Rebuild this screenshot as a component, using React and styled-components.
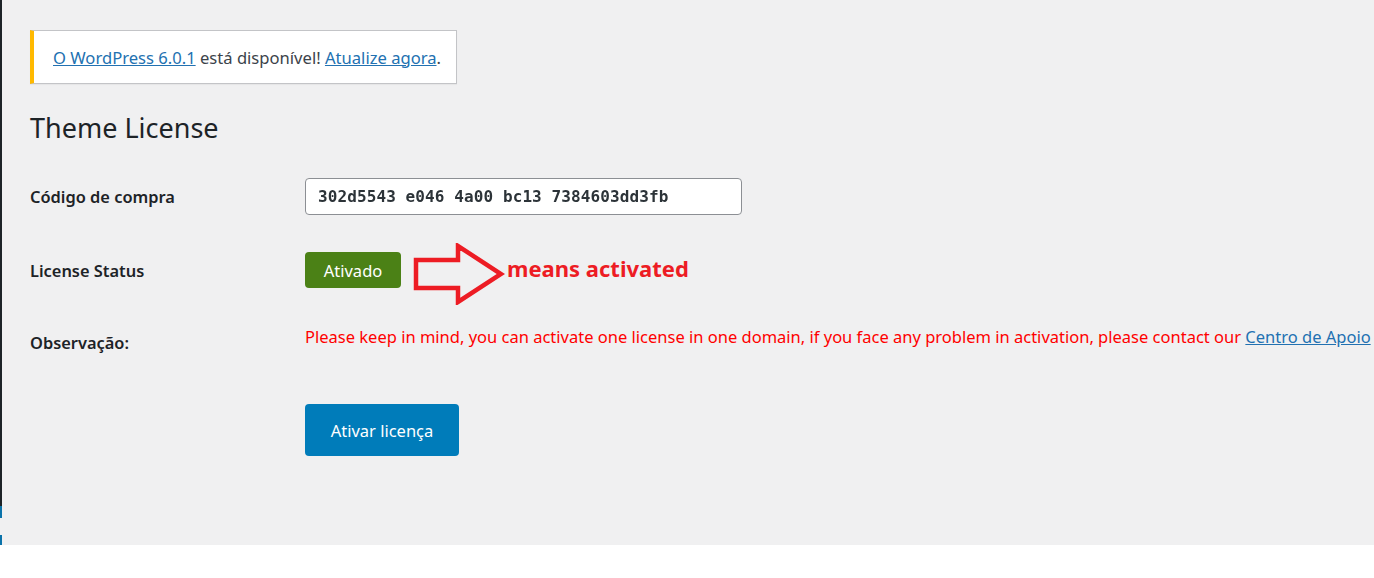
import React from "react";
import styled, { createGlobalStyle } from "styled-components";

const GlobalStyle = createGlobalStyle`
  html, body {
    margin: 0;
    padding: 0;
    background: #ffffff;
  }
  body {
    font-family: "Noto Sans", "Open Sans", sans-serif;
    color: #1d2327;
  }
`;

const Screen = styled.div`
  display: flex;
  height: 545px;
  background: #f0f0f1;
  overflow: hidden;
`;

const SideStrip = styled.div`
  width: 2px;
  flex-shrink: 0;
  display: flex;
  flex-direction: column;
`;

const StripPart = styled.div`
  height: ${(p) => p.h}px;
  background: ${(p) => p.color};
`;

const Content = styled.div`
  flex: 1;
  padding: 30px 0 0 28px;
  white-space: nowrap;
`;

const Notice = styled.div`
  box-sizing: border-box;
  width: 427px;
  height: 54px;
  background: #fff;
  border: 1px solid #c3c4c7;
  border-left: 4px solid #ffb900;
  box-shadow: 0 1px 1px rgba(0, 0, 0, 0.04);
  display: flex;
  align-items: center;
  padding-left: 19px;
  font-size: 16.6px;
  color: #3c434a;
`;

const Link = styled.a`
  color: #2271b1;
  text-decoration: underline;
`;

const Title = styled.h1`
  margin: 25px 0 31px;
  font-size: 27px;
  font-weight: 400;
  line-height: 38px;
  color: #1d2327;
`;

const Row = styled.div`
  display: flex;
  align-items: ${(p) => p.align || "center"};
  height: ${(p) => (p.h ? `${p.h}px` : "auto")};
  margin-bottom: ${(p) => p.mb || 0}px;
`;

const Label = styled.div`
  width: 275px;
  flex-shrink: 0;
  font-size: 16.4px;
  font-weight: 600;
  line-height: 20px;
  color: #1d2327;
  margin-top: ${(p) => p.mt || 0}px;
  margin-bottom: ${(p) => p.mbot || 0}px;
`;

const CodeInput = styled.input`
  box-sizing: border-box;
  width: 437px;
  height: 37px;
  border: 1px solid #8c8f94;
  border-radius: 4px;
  background: #fff;
  padding: 0 12px;
  font-family: "DejaVu Sans Mono", monospace;
  font-size: 16px;
  font-weight: 700;
  letter-spacing: 0.1px;
  color: #2c3338;
  filter: blur(0.5px);
`;

const StatusBadge = styled.span`
  display: inline-flex;
  align-items: center;
  justify-content: center;
  width: 96px;
  height: 36px;
  border-radius: 4px;
  background: #4b8116;
  color: #fff;
  font-size: 16.5px;
  margin-bottom: 8px;
`;

const Arrow = styled.svg`
  margin-left: 12px;
  flex-shrink: 0;
`;

const Callout = styled.span`
  margin-left: 2px;
  margin-bottom: 12px;
  font-size: 22px;
  font-weight: 700;
  color: #ed1c24;
`;

const Note = styled.div`
  font-size: 16.5px;
  line-height: 20px;
  color: #ff0000;
`;

const SubmitButton = styled.button`
  margin-left: 275px;
  width: 154px;
  height: 52px;
  border: none;
  border-radius: 4px;
  background: #007cba;
  color: #fff;
  font-family: inherit;
  font-size: 16.5px;
  cursor: pointer;
`;

const Below = styled.div`
  height: 33px;
  background: #fff;
`;

export default function App() {
  return (
    <>
      <GlobalStyle />
      <Screen>
        <SideStrip>
          <StripPart h={506} color="#1d2327" />
          <StripPart h={12} color="#0a73aa" />
          <StripPart h={17} color="#f0f0f1" />
          <StripPart h={10} color="#0a73aa" />
        </SideStrip>
        <Content>
          <Notice>
            <span>
              <Link href="#">O WordPress 6.0.1</Link> está disponível!{" "}
              <Link href="#">Atualize agora</Link>.
            </span>
          </Notice>
          <Title>Theme License</Title>

          <Row h={37} mb={28}>
            <Label>Código de compra</Label>
            <CodeInput readOnly value="302d5543 e046 4a00 bc13 7384603dd3fb" />
          </Row>

          <Row h={62} mb={22}>
            <Label mbot={6}>License Status</Label>
            <StatusBadge>Ativado</StatusBadge>
            <Arrow width="92" height="62" viewBox="0 0 92 62">
              <polygon
                points="3,17 45,17 45,3 88,31 45,59 45,45 3,45"
                fill="none"
                stroke="#ed1c24"
                strokeWidth="4.5"
                strokeLinejoin="miter"
              />
            </Arrow>
            <Callout>means activated</Callout>
          </Row>

          <Row align="flex-start" mb={51}>
            <Label mt={6}>Observação:</Label>
            <Note>
              Please keep in mind, you can activate one license in one domain, if you face any
              problem in activation, please contact our <Link href="#">Centro de Apoio</Link>
            </Note>
          </Row>

          <SubmitButton>Ativar licença</SubmitButton>
        </Content>
      </Screen>
      <Below />
    </>
  );
}
